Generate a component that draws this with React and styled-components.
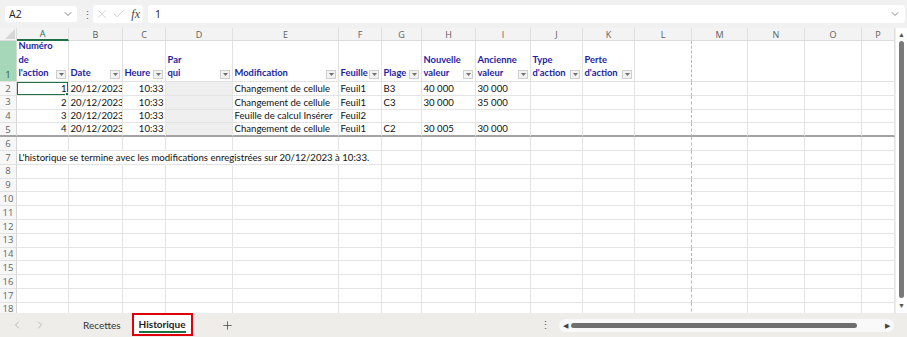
import React from "react";
import styled, { createGlobalStyle } from "styled-components";
import { ChevronDown, X, Check, Plus, ChevronLeft, ChevronRight } from "lucide-react";

const GlobalStyle = createGlobalStyle`
  html, body {
    margin: 0;
    padding: 0;
    background: #fff;
  }
  body {
    font-family: Lato, "Liberation Sans", sans-serif;
  }
`;

const COLS = ["A", "B", "C", "D", "E", "F", "G", "H", "I", "J", "K", "L", "M", "N", "O", "P"];

const HEADERS = [
  ["Numéro", "de", "l'action"],
  ["Date"],
  ["Heure"],
  ["Par", "qui"],
  ["Modification"],
  ["Feuille"],
  ["Plage"],
  ["Nouvelle", "valeur"],
  ["Ancienne", "valeur"],
  ["Type", "d'action"],
  ["Perte", "d'action"],
];

const DATA = [
  ["1", "20/12/2023", "10:33", "", "Changement de cellule", "Feuil1", "B3", "40 000", "30 000"],
  ["2", "20/12/2023", "10:33", "", "Changement de cellule", "Feuil1", "C3", "30 000", "35 000"],
  ["3", "20/12/2023", "10:33", "", "Feuille de calcul Insérer", "Feuil2", "", "", ""],
  ["4", "20/12/2023", "10:33", "", "Changement de cellule", "Feuil1", "C2", "30 005", "30 000"],
];

function App() {
  const emptyRows = [];
  for (let r = 8; r <= 18; r++) emptyRows.push(r);

  return (
    <Page>
      <GlobalStyle />
      <FormulaBar>
        <NameBox>
          <span>A2</span>
          <ChevronDown size={12} strokeWidth={1.5} color="#555" />
        </NameBox>
        <Dots>⋮</Dots>
        <FxBox>
          <X size={14} strokeWidth={1} color="#b0b0b0" />
          <Check size={14} strokeWidth={1} color="#b0b0b0" />
          <Fx>fx</Fx>
        </FxBox>
        <FormulaInput>
          <span>1</span>
          <ChevronDown size={12} strokeWidth={1.5} color="#666" />
        </FormulaInput>
      </FormulaBar>

      <SheetArea>
        <Grid>
          <Corner>
            <svg width="10" height="10" viewBox="0 0 10 10">
              <path d="M10 0V10H0z" fill="#d6d6d6" />
            </svg>
          </Corner>
          {COLS.map((c) => (
            <ColHead key={c} $active={c === "A"}>{c}</ColHead>
          ))}

          <RowHead $selected>1</RowHead>
          {COLS.map((c, i) => (
            <HeadCell key={c} $pageBreak={c === "L"}>
              {HEADERS[i] && (
                <>
                  <HeadText>
                    {HEADERS[i].map((l) => (
                      <div key={l}>{l}</div>
                    ))}
                  </HeadText>
                  <FilterBtn>
                    <svg width="5" height="3" viewBox="0 0 5 3">
                      <path d="M0 0h5L2.5 3z" fill="#707070" />
                    </svg>
                  </FilterBtn>
                </>
              )}
            </HeadCell>
          ))}

          {DATA.map((row, r) => (
            <React.Fragment key={r}>
              <RowHead $thick={r === 3}>{r + 2}</RowHead>
              {COLS.map((c, i) => (
                <Cell
                  key={c}
                  $align={i === 0 || i === 2 ? "right" : "left"}
                  $fill={i === 3}
                  $thick={r === 3}
                  $pageBreak={c === "L"}
                  $active={r === 0 && i === 0}
                >
                  {row[i] || ""}
                  {r === 0 && i === 0 && <FillHandle />}
                </Cell>
              ))}
            </React.Fragment>
          ))}

          <RowHead>6</RowHead>
          {COLS.map((c) => (
            <Cell key={c} $pageBreak={c === "L"} />
          ))}

          <RowHead>7</RowHead>
          {COLS.map((c, i) => (
            <Cell key={c} $pageBreak={c === "L"} $noRight={i < 5} $overflow={i === 0}>
              {i === 0 && "L'historique se termine avec les modifications enregistrées sur 20/12/2023 à 10:33."}
            </Cell>
          ))}

          {emptyRows.map((n) => (
            <React.Fragment key={n}>
              <RowHead>{n}</RowHead>
              {COLS.map((c) => (
                <Cell key={c} $pageBreak={c === "L"} />
              ))}
            </React.Fragment>
          ))}
        </Grid>
        <VScroll>
          <Arrow>▲</Arrow>
          <VThumb />
          <Arrow>▼</Arrow>
        </VScroll>
      </SheetArea>

      <TabBar>
        <NavArrows>
          <ChevronLeft size={12} strokeWidth={1.3} color="#9a9a9a" />
          <ChevronRight size={12} strokeWidth={1.3} color="#9a9a9a" />
        </NavArrows>
        <Tab>Recettes</Tab>
        <Tab $active>
          <ActiveLabel>Historique</ActiveLabel>
        </Tab>
        <AddBtn>
          <Plus size={13} strokeWidth={1.4} color="#444" />
        </AddBtn>
        <Spacer />
        <TabDots>⋮</TabDots>
        <HScroll>
          <SmallArrow>◀</SmallArrow>
          <HThumb />
          <SmallArrow>▶</SmallArrow>
        </HScroll>
      </TabBar>
    </Page>
  );
}

const Page = styled.div`
  width: 907px;
  height: 337px;
  display: flex;
  flex-direction: column;
  overflow: hidden;
  background: #fff;
`;

const FormulaBar = styled.div`
  height: 28px;
  flex-shrink: 0;
  display: flex;
  align-items: center;
  gap: 5px;
  padding: 0 2px 0 5px;
  background: #f1f1f1;
  box-sizing: border-box;
  font-family: "Open Sans", Lato, sans-serif;
  font-size: 10.5px;
  color: #222;
`;

const NameBox = styled.div`
  width: 72px;
  height: 16px;
  box-sizing: border-box;
  background: #fff;
  border-radius: 3px;
  display: flex;
  align-items: center;
  justify-content: space-between;
  padding: 0 3px 0 4px;
`;

const Dots = styled.div`
  color: #666;
  font-size: 11px;
  width: 6px;
  text-align: center;
`;

const FxBox = styled.div`
  width: 50px;
  height: 18px;
  background: #fff;
  border-radius: 3px;
  display: flex;
  align-items: center;
  gap: 3px;
  padding: 0 3px 0 2px;
  box-sizing: border-box;
`;

const Fx = styled.span`
  font-family: "Liberation Serif", serif;
  font-style: italic;
  font-size: 12px;
  color: #444;
  margin-left: 3px;
`;

const FormulaInput = styled.div`
  flex: 1;
  height: 18px;
  background: #fff;
  border-radius: 3px;
  display: flex;
  align-items: center;
  justify-content: space-between;
  padding: 0 4px 0 7px;
  box-sizing: border-box;
`;

const SheetArea = styled.div`
  flex: 1;
  min-height: 0;
  display: flex;
  overflow: hidden;
`;

const Grid = styled.div`
  flex: 1;
  display: grid;
  grid-template-columns: 17px 52px 54px 43px 67px 106px 43px 40px 54px 55px 52px 52px 57px 56px 57px 57px 1fr;
  grid-template-rows: 13px 41px;
  grid-auto-rows: 13.8px;
  font-size: 9.6px;
  color: #111;
  overflow: hidden;
  align-content: start;
`;

const Corner = styled.div`
  background: #f3f3f3;
  border-right: 1px solid #dcdcdc;
  border-bottom: 1px solid #dcdcdc;
  display: flex;
  align-items: flex-end;
  justify-content: flex-end;
  padding: 0 1px 1px 0;
`;

const ColHead = styled.div`
  background: #f3f3f3;
  border-right: 1px solid #e0e0e0;
  border-bottom: ${(p) => (p.$active ? "2px solid #1e7145" : "1px solid #dcdcdc")};
  color: ${(p) => (p.$active ? "#1e7145" : "#606060")};
  font-family: "Open Sans", Lato, sans-serif;
  font-size: 9px;
  display: flex;
  align-items: center;
  justify-content: center;
  line-height: 1;
`;

const RowHead = styled.div`
  background: ${(p) => (p.$selected ? "#a6d7b8" : "#f7f7f7")};
  color: ${(p) => (p.$selected ? "#1a5e38" : "#666")};
  border-right: 1px solid #d6d6d6;
  border-bottom: ${(p) => (p.$thick ? "2px solid #a3a3a3" : "1px solid #e2e2e2")};
  font-family: "Open Sans", Lato, sans-serif;
  font-size: 9.5px;
  display: flex;
  align-items: ${(p) => (p.$selected ? "flex-end" : "center")};
  justify-content: center;
  padding-bottom: ${(p) => (p.$selected ? "2px" : "0")};
  box-sizing: border-box;
  line-height: 1;
`;

const HeadCell = styled.div`
  display: flex;
  align-items: flex-end;
  justify-content: space-between;
  padding: 0 2px 1px 1.5px;
  border-right: ${(p) => (p.$pageBreak ? "1px dashed #b8b8b8" : "1px solid #e2e2e2")};
  border-bottom: 1px solid #e2e2e2;
  color: #1e1e9e;
  font-weight: 700;
  font-size: 9.4px;
  line-height: 13.6px;
  min-width: 0;
  box-sizing: border-box;
`;

const HeadText = styled.div`
  white-space: nowrap;
`;

const FilterBtn = styled.div`
  width: 10px;
  height: 9px;
  flex-shrink: 0;
  margin-bottom: 1px;
  box-sizing: border-box;
  border: 1px solid #cfcfcf;
  background: #f2f2f2;
  display: flex;
  align-items: center;
  justify-content: center;
`;

const Cell = styled.div`
  position: relative;
  min-width: 0;
  padding: 0 1.5px;
  box-sizing: border-box;
  white-space: nowrap;
  overflow: ${(p) => (p.$overflow ? "visible" : "hidden")};
  z-index: ${(p) => (p.$overflow ? 1 : 0)};
  text-align: ${(p) => p.$align || "left"};
  background: ${(p) => (p.$fill ? "#efefef" : "transparent")};
  border-right: ${(p) =>
    p.$noRight ? "1px solid transparent" : p.$pageBreak ? "1px dashed #b8b8b8" : "1px solid #e4e4e4"};
  border-bottom: ${(p) => (p.$thick ? "2px solid #a3a3a3" : "1px solid #e4e4e4")};
  line-height: 13px;
  display: flex;
  align-items: flex-end;
  justify-content: ${(p) => (p.$align === "right" ? "flex-end" : "flex-start")};

  ${(p) =>
    p.$active &&
    `
    &::after {
      content: "";
      position: absolute;
      left: -1px;
      top: -1px;
      right: -1px;
      bottom: -1px;
      border: 2px solid #1e7145;
      pointer-events: none;
    }
  `}
`;

const FillHandle = styled.span`
  position: absolute;
  right: -3px;
  bottom: -3px;
  width: 4px;
  height: 4px;
  background: #1e7145;
  border: 1px solid #fff;
  z-index: 2;
`;

const VScroll = styled.div`
  width: 12px;
  flex-shrink: 0;
  background: #fff;
  border-left: 1px solid #ececec;
  display: flex;
  flex-direction: column;
  align-items: center;
  justify-content: space-between;
  padding: 2px 0 4px;
  box-sizing: border-box;
`;

const Arrow = styled.div`
  font-size: 7px;
  color: #555;
  line-height: 8px;
`;

const VThumb = styled.div`
  flex: 1;
  width: 5px;
  margin: 3px 0;
  border-radius: 3px;
  background: #7a7a7a;
`;

const TabBar = styled.div`
  height: 24px;
  flex-shrink: 0;
  display: flex;
  align-items: stretch;
  background: #efedea;
  font-family: Lato, "Liberation Sans", sans-serif;
  font-size: 10px;
  color: #333;
  padding-right: 13px;
`;

const NavArrows = styled.div`
  display: flex;
  align-items: center;
  gap: 11px;
  padding-left: 11px;
  width: 72px;
  box-sizing: border-box;
`;

const Tab = styled.div`
  display: flex;
  align-items: center;
  padding: 0 ${(p) => (p.$active ? "5px" : "11px")};
  box-sizing: border-box;
  ${(p) =>
    p.$active &&
    `
    border: 2px solid #e0000b;
    background: #fff;
    font-weight: 700;
    color: #1c1c1c;
    margin-bottom: 1px;
  `}
`;

const ActiveLabel = styled.span`
  border-bottom: 2px solid #1e7145;
  padding: 2px 0 1px;
`;

const AddBtn = styled.div`
  display: flex;
  align-items: center;
  padding-left: 28px;
`;

const Spacer = styled.div`
  flex: 1;
`;

const TabDots = styled.div`
  display: flex;
  align-items: center;
  color: #666;
  font-size: 11px;
  padding-right: 8px;
`;

const HScroll = styled.div`
  width: 335px;
  height: 13px;
  align-self: center;
  border-radius: 7px;
  background: #f9f9f9;
  display: flex;
  align-items: center;
  gap: 3px;
  padding: 0 4px;
  box-sizing: border-box;
`;

const SmallArrow = styled.div`
  font-size: 7px;
  color: #444;
  line-height: 1;
`;

const HThumb = styled.div`
  flex: 1;
  height: 5px;
  border-radius: 3px;
  background: #6f6f6f;
  margin-right: 25px;
`;

export default App;
